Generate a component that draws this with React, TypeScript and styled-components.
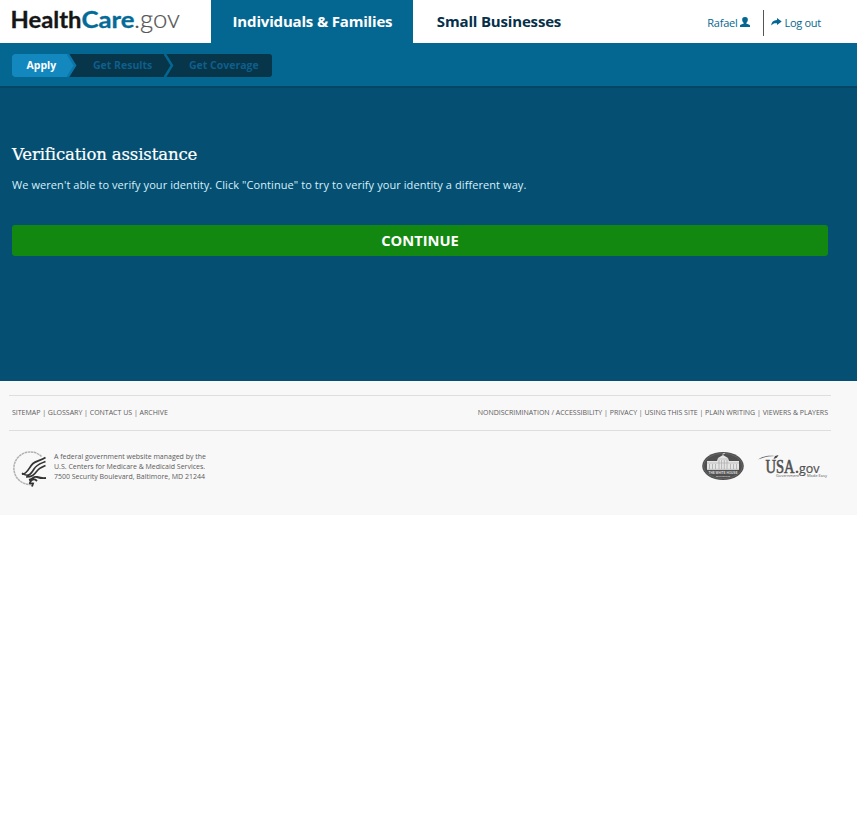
import React from "react";
import styled, { createGlobalStyle } from "styled-components";

const GlobalStyle = createGlobalStyle`
  * { box-sizing: border-box; }
  body { margin: 0; background: #fff; font-family: "Open Sans", sans-serif; }
  h1, p { margin: 0; font-weight: 400; }
  a { color: inherit; text-decoration: none; }
`;

const TopBar = styled.header`
  display: flex;
  height: 43px;
  background: #fff;
`;

const Brand = styled.a`
  width: 211px;
  padding: 5px 0 0 10px;
  svg { display: block; }
`;

const Tab = styled.a<{ $active?: boolean; $width: number }>`
  width: ${(p) => p.$width}px;
  height: 43px;
  padding-left: 1px;
  line-height: 43px;
  text-align: center;
  white-space: nowrap;
  font-size: 15px;
  font-weight: 700;
  letter-spacing: -0.17px;
  color: ${(p) => (p.$active ? "#fff" : "#06304a")};
  background: ${(p) => (p.$active ? "#046791" : "transparent")};
`;

const Account = styled.div`
  display: flex;
  align-items: center;
  height: 26px;
  margin: 10px 36px 0 auto;
  font-size: 11px;
  letter-spacing: -0.27px;
  color: #046791;
`;

const AccountLink = styled.a<{ $divided?: boolean }>`
  display: flex;
  align-items: center;
  height: 26px;
  line-height: 26px;
  gap: ${(p) => (p.$divided ? 2 : 3)}px;
  padding: ${(p) => (p.$divided ? "0 0 0 7px" : "0 13px 0 0")};
  border-left: ${(p) => (p.$divided ? "1px solid #555" : "0")};
  svg { margin-top: -3px; }
`;

const AccountText = styled.span`
  height: 26px;
  line-height: 25px;
`;

const Progress = styled.nav`
  height: 45px;
  padding: 11px 12px 0;
  background: #046791;
  border-bottom: 2px solid #044664;
`;

const Steps = styled.div`
  display: flex;
  width: 260px;
  height: 23px;
  overflow: hidden;
  border-radius: 3px;
  background: #07354a;
`;

const Step = styled.span<{ $active?: boolean; $width: number; $indent: number }>`
  width: ${(p) => p.$width}px;
  padding-left: ${(p) => p.$indent}px;
  line-height: 23px;
  white-space: nowrap;
  font-size: 10.5px;
  font-weight: 700;
  color: ${(p) => (p.$active ? "#fff" : "#0e5f8c")};
  background: ${(p) => (p.$active ? "#1388bf" : "transparent")};
`;

const Chevron = styled.svg`
  display: block;
  flex: none;
`;

const Main = styled.main`
  height: 293px;
  padding: 55px 29px 0 12px;
  background: #054f72;
  color: #fff;
`;

const Title = styled.h1`
  height: 24px;
  line-height: 24px;
  font-family: "DejaVu Serif", serif;
  font-size: 16.5px;
  letter-spacing: -0.13px;
  -webkit-text-stroke: 0.2px #fff;
  white-space: nowrap;
`;

const Message = styled.p`
  margin-top: 10px;
  line-height: 16px;
  font-size: 11px;
  letter-spacing: 0.077px;
  color: #d5f0fa;
`;

const ContinueButton = styled.button`
  display: block;
  width: 100%;
  height: 31px;
  margin-top: 32px;
  padding: 0 0 1px;
  border: 0;
  border-radius: 3px;
  background: #128810;
  color: #fff;
  font: 700 14.7px/30px "Open Sans", sans-serif;
`;

const Footer = styled.footer`
  height: 134px;
  padding: 14px 26px 0 9px;
  background: #f8f8f8;
  color: #5b5b5b;
`;

const FooterLinks = styled.div`
  display: flex;
  justify-content: space-between;
  height: 36px;
  padding: 0 3px;
  border-top: 1px solid #dedede;
  border-bottom: 1px solid #dedede;
  line-height: 33px;
  font-size: 7px;
  letter-spacing: -0.01px;
  white-space: nowrap;
`;

const FooterInfo = styled.div`
  display: flex;
  padding: 20px 3px 0;
  svg { display: block; flex: none; }
`;

const Address = styled.p`
  margin: 1px 0 0 6px;
  line-height: 10px;
  font-size: 7px;
  letter-spacing: -0.01px;
  white-space: nowrap;
`;

const Seals = styled.div`
  display: flex;
  gap: 14px;
  margin-left: auto;
`;

const Wordmark = () => (
  <svg width="176" height="32" viewBox="10 5 176 32" aria-label="HealthCare.gov">
    <g fontFamily="Lato, sans-serif" fontSize="22">
      <text x="10.500" y="27.500" fontWeight="700" fill="#161616" stroke="#161616" strokeWidth=".3" textLength="71" lengthAdjust="spacingAndGlyphs">Health</text>
      <text x="81.500" y="27.500" fontWeight="700" fill="#046b98" stroke="#046b98" strokeWidth=".3" textLength="53" lengthAdjust="spacingAndGlyphs">Care</text>
      <text x="134" y="27.500" fontWeight="300" fontSize="24.500" fill="#555" stroke="#555" strokeWidth=".2" textLength="46" lengthAdjust="spacingAndGlyphs">.gov</text>
    </g>
  </svg>
);

const PersonIcon = () => (
  <svg width="10" height="10" viewBox="0 0 10 10" fill="#046791">
    <path d="M5 0C2.800 0 2 1.200 2.200 3c.1 1.300.8 2.300 1.400 2.900v.7C3.500 7.300.2 7.400 0 8.500V10h10V8.500C9.800 7.400 6.500 7.300 6.400 6.600v-.7C7 5.300 7.700 4.300 7.800 3 8 1.200 7.200 0 5 0Z" />
  </svg>
);

const ShareIcon = () => (
  <svg width="11" height="8" viewBox="0 0 11 8" fill="#046791">
    <path d="M6 0 10.700 3.400 6 7V5.300C3.700 5 1.800 5.500.3 7.500.4 4 2.500 2 6 1.900Z" />
  </svg>
);

const StepChevron = ({ from, line }: { from: string; line: string }) => (
  <Chevron width="10" height="23" viewBox="0 0 10 23">
    <path d="M0 0H1L8 11.500 1 23H0Z" fill={from} />
    <path d="M.5 -.5 8 11.500 .5 23.500" fill="none" stroke={line} strokeWidth="2.500" />
  </Chevron>
);

const HealthSeal = () => (
  <svg width="36" height="36" viewBox="0 0 36 36" fill="none">
    <path d="M29.500 5.500A16.300 16.300 0 1 0 19 33.500" stroke="#b1b1b1" strokeWidth="1.500" strokeDasharray="2.600 .5" />
    <path d="M10 23C15 24 17 16 21 12.500 24 10 29 9.500 33.500 6.500" stroke="#333" strokeWidth="1.700" />
    <path d="M10 22c6 5 9 1 12-4 3-5 7-5.500 11.500-7.500M14 26c6 0 8-2 11-6 2-3 5-4 8.500-5.500" stroke="#333" strokeWidth="1.600" />
    <path d="M17 29c4-1 4-4 8-3 3 1 5 1.500 9 1M18 31c3-4 5-3 7-1M17 32l4 .5-1 3" stroke="#333" strokeWidth="1.900" />
  </svg>
);

const WhiteHouseSeal = () => (
  <svg width="42" height="30" viewBox="0 0 42 30">
    <ellipse cx="21" cy="15" rx="20.800" ry="14" fill="#505050" />
    <ellipse cx="21" cy="15" rx="19.500" ry="12.700" fill="none" stroke="#777" strokeWidth=".5" />
    <path d="M5 10h10l1-3 5-3 5 3 1 3h10v9H5Z" fill="#e5e5e5" />
    <path d="M16 8h10M5 12h32M5 18.300h32" stroke="#aaa" strokeWidth=".6" />
    <path d="M7.500 13v5M10.500 13v5M13.500 13v5M17 9v9M19.600 9v9M22.300 9v9M25 9v9M28.500 13v5M31.500 13v5M34.500 13v5" stroke="#aaa" strokeWidth=".8" />
    <path d="M21 4V2.500h2" stroke="#ddd" strokeWidth=".7" fill="none" />
    <g fill="#ddd" fontFamily="Liberation Sans, sans-serif" fontWeight="700">
      <text x="6.500" y="22.900" fontSize="3" textLength="29" lengthAdjust="spacingAndGlyphs">THE WHITE HOUSE</text>
      <text x="14" y="26" fontSize="2.300" textLength="14" lengthAdjust="spacingAndGlyphs">WASHINGTON</text>
    </g>
  </svg>
);

const UsaLogo = () => (
  <svg width="70" height="30" viewBox="0 0 70 30">
    <path d="M0 8.500C5 5 10 4 17 5 10 5.200 5 6.300 0 8.500Z" fill="#555" />
    <path d="m15.500 8 1.600-3 3.400-1-1.300 2.300-1 .7Z" fill="#444" />
    <text x="7.500" y="21.500" fontFamily="Liberation Serif, serif" fontSize="18" fill="#505050" stroke="#505050" strokeWidth=".6" textLength="29" lengthAdjust="spacingAndGlyphs">USA</text>
    <text x="37" y="21.500" fontFamily="Open Sans, sans-serif" fontWeight="700" fontSize="14" fill="#555">.</text>
    <text x="41" y="21.500" fontFamily="Open Sans, sans-serif" fontSize="13" fill="#505050" stroke="#505050" strokeWidth=".2" textLength="20.500" lengthAdjust="spacingAndGlyphs">gov</text>
    <g fontFamily="Open Sans, sans-serif" fontSize="3.600" fill="#555">
      <text x="18" y="25.500" textLength="23" lengthAdjust="spacingAndGlyphs">Government</text>
      <text x="49" y="25.500" textLength="20" lengthAdjust="spacingAndGlyphs">Made Easy</text>
    </g>
  </svg>
);

export default function App() {
  return (
    <>
      <GlobalStyle />
      <TopBar>
        <Brand href="#"><Wordmark /></Brand>
        <Tab href="#" $active $width={202}>Individuals &amp; Families</Tab>
        <Tab href="#" $width={171}>Small Businesses</Tab>
        <Account>
          <AccountLink href="#"><AccountText>Rafael</AccountText><PersonIcon /></AccountLink>
          <AccountLink href="#" $divided><ShareIcon /><AccountText>Log out</AccountText></AccountLink>
        </Account>
      </TopBar>
      <Progress>
        <Steps>
          <Step $active $width={55} $indent={14.5}>Apply</Step>
          <StepChevron from="#1388bf" line="#0b76aa" />
          <Step $width={87} $indent={16}>Get Results</Step>
          <StepChevron from="#07354a" line="#046791" />
          <Step $width={98} $indent={15}>Get Coverage</Step>
        </Steps>
      </Progress>
      <Main>
        <Title>Verification assistance</Title>
        <Message>We weren't able to verify your identity. Click "Continue" to try to verify your identity a different way.</Message>
        <ContinueButton>CONTINUE</ContinueButton>
      </Main>
      <Footer>
        <FooterLinks>
          <div><a href="#">SITEMAP</a> | <a href="#">GLOSSARY</a> | <a href="#">CONTACT US</a> | <a href="#">ARCHIVE</a></div>
          <div><a href="#">NONDISCRIMINATION / ACCESSIBILITY</a> | <a href="#">PRIVACY</a> | <a href="#">USING THIS SITE</a> | <a href="#">PLAIN WRITING</a> | <a href="#">VIEWERS &amp; PLAYERS</a></div>
        </FooterLinks>
        <FooterInfo>
          <HealthSeal />
          <Address>A federal government website managed by the<br />U.S. Centers for Medicare &amp; Medicaid Services.<br />7500 Security Boulevard, Baltimore, MD 21244</Address>
          <Seals><WhiteHouseSeal /><UsaLogo /></Seals>
        </FooterInfo>
      </Footer>
    </>
  );
}
